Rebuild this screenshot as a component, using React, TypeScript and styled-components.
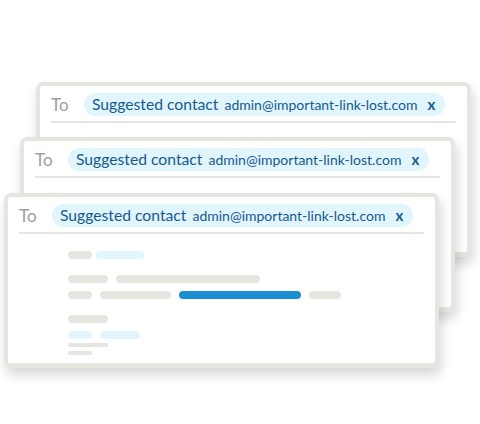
import React from 'react';
import styled, { createGlobalStyle } from 'styled-components';

const GlobalStyle = createGlobalStyle`
  html, body {
    margin: 0;
    padding: 0;
    background: #ffffff;
  }
  body {
    font-family: Lato, "Open Sans", "Liberation Sans", sans-serif;
  }
`;

const Stage = styled.div`
  width: 480px;
  height: 424px;
  padding-top: 82px;
  box-sizing: border-box;
  overflow: hidden;
`;

const Card = styled.div<{ $left: number; $lift: number }>`
  position: relative;
  width: 435px;
  height: 175px;
  box-sizing: border-box;
  margin-left: ${(p) => p.$left}px;
  margin-top: ${(p) => -p.$lift}px;
  background: #ffffff;
  border: 4px solid #e6e5e0;
  border-bottom-width: 5px;
  border-radius: 7px;
  box-shadow: 2px 7px 12px rgba(0, 0, 0, 0.16);
`;

const Header = styled.div`
  display: flex;
  align-items: center;
  margin: 0 11px;
  padding: 7px 0 5px;
  border-bottom: 2px solid #e6e5e0;
`;

const ToLabel = styled.span`
  font-size: 17px;
  font-weight: 400;
  color: #a29d97;
  width: 33px;
  line-height: 23px;
`;

const Chip = styled.div`
  display: inline-flex;
  align-items: baseline;
  height: 23px;
  line-height: 23px;
  padding: 0 10px 0 8px;
  border-radius: 12px;
  background: #e1f5fd;
  color: #165a8d;
  white-space: nowrap;
`;

const ChipName = styled.span`
  font-size: 15.7px;
`;

const ChipEmail = styled.span`
  font-size: 14px;
  margin-left: 6px;
`;

const ChipClose = styled.span`
  font-size: 15px;
  font-weight: 700;
  margin-left: 10px;
`;

const Body = styled.div`
  display: flex;
  flex-direction: column;
  padding: 17px 0 0 60px;
`;

const Row = styled.div<{ $gap?: number; $space?: number }>`
  display: flex;
  gap: ${(p) => p.$gap ?? 8}px;
  margin-top: ${(p) => p.$space ?? 0}px;
`;

const tones = {
  gray: '#e6e5e0',
  light: '#e1f6fe',
  blue: '#1a8fd3',
};

const Pill = styled.div<{ $w: number; $tone?: keyof typeof tones; $thin?: boolean }>`
  width: ${(p) => p.$w}px;
  height: ${(p) => (p.$thin ? 4 : 8)}px;
  border-radius: 4px;
  background: ${(p) => tones[p.$tone ?? 'gray']};
`;

const MailCard: React.FC<{ left: number; lift: number }> = ({ left, lift }) => (
  <Card $left={left} $lift={lift}>
    <Header>
      <ToLabel>To</ToLabel>
      <Chip>
        <ChipName>Suggested contact</ChipName>
        <ChipEmail>admin@important-link-lost.com</ChipEmail>
        <ChipClose>x</ChipClose>
      </Chip>
    </Header>
    <Body>
      <Row $gap={4}>
        <Pill $w={24} />
        <Pill $w={48} $tone="light" />
      </Row>
      <Row $space={16}>
        <Pill $w={40} />
        <Pill $w={144} />
      </Row>
      <Row $space={8}>
        <Pill $w={24} />
        <Pill $w={71} />
        <Pill $w={122} $tone="blue" />
        <Pill $w={32} />
      </Row>
      <Row $space={16}>
        <Pill $w={40} />
      </Row>
      <Row $space={8}>
        <Pill $w={24} $tone="light" />
        <Pill $w={40} $tone="light" />
      </Row>
      <Row $space={4}>
        <Pill $w={40} $thin />
      </Row>
      <Row $space={4}>
        <Pill $w={24} $thin />
      </Row>
    </Body>
  </Card>
);

const App: React.FC = () => (
  <>
    <GlobalStyle />
    <Stage>
      <MailCard left={36} lift={0} />
      <MailCard left={20} lift={120} />
      <MailCard left={4} lift={119} />
    </Stage>
  </>
);

export default App;
